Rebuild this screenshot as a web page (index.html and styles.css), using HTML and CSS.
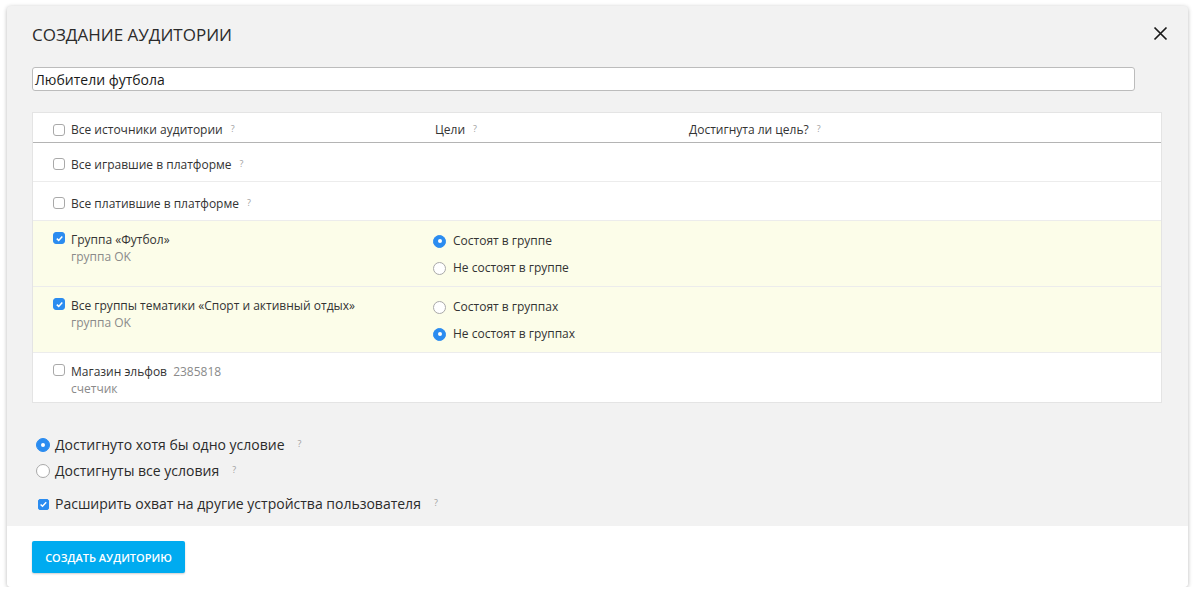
FILE: index.html
```html
<!DOCTYPE html>
<html lang="ru">
<head>
<meta charset="utf-8">
<title>Создание аудитории</title>
<link rel="stylesheet" href="styles.css">
</head>
<body>
<div class="modal">
  <div class="body">
    <div class="head">
      <h1 class="title">Создание аудитории</h1>
      <span class="close"><svg width="15" height="15" viewBox="0 0 15 15"><path d="M1.5 1.5L13.5 13.5M13.5 1.5L1.5 13.5" stroke="#1a1a1a" stroke-width="1.7" fill="none"/></svg></span>
    </div>
    <div class="name-field">Любители футбола</div>

    <div class="table">
      <div class="row header">
        <div class="cell c1"><span class="cb"></span><span class="lbl">Все источники аудитории</span><span class="q">?</span></div>
        <div class="cell c2"><span class="lbl hdr2">Цели</span><span class="q">?</span></div>
        <div class="cell c3"><span class="lbl">Достигнута ли цель?</span><span class="q">?</span></div>
      </div>
      <div class="row simple">
        <div class="cell c1"><span class="cb"></span><span class="lbl">Все игравшие в платформе</span><span class="q">?</span></div>
      </div>
      <div class="row simple">
        <div class="cell c1"><span class="cb"></span><span class="lbl">Все платившие в платформе</span><span class="q">?</span></div>
      </div>
      <div class="row multi active">
        <div class="cell c1 top">
          <span class="cb on"><svg width="9" height="9" viewBox="0 0 9 9"><path d="M1.8 4.6L3.7 6.4L7.3 2.4" stroke="#fff" stroke-width="1.5" fill="none"/></svg></span>
          <div class="src"><div class="lbl">Группа «Футбол»</div><div class="sub">группа OK</div></div>
        </div>
        <div class="cell c2 radios">
          <div class="ropt"><span class="rb on"></span>Состоят в группе</div>
          <div class="ropt"><span class="rb"></span>Не состоят в группе</div>
        </div>
      </div>
      <div class="row multi active">
        <div class="cell c1 top">
          <span class="cb on"><svg width="9" height="9" viewBox="0 0 9 9"><path d="M1.8 4.6L3.7 6.4L7.3 2.4" stroke="#fff" stroke-width="1.5" fill="none"/></svg></span>
          <div class="src"><div class="lbl">Все группы тематики «Спорт и активный отдых»</div><div class="sub">группа OK</div></div>
        </div>
        <div class="cell c2 radios">
          <div class="ropt"><span class="rb"></span>Состоят в группах</div>
          <div class="ropt"><span class="rb on"></span>Не состоят в группах</div>
        </div>
      </div>
      <div class="row last">
        <div class="cell c1 top">
          <span class="cb"></span>
          <div class="src"><div class="lbl">Магазин эльфов <span class="num">2385818</span></div><div class="sub">счетчик</div></div>
        </div>
      </div>
    </div>

    <div class="options">
      <div class="opt"><span class="rb big on"></span>Достигнуто хотя бы одно условие<span class="q">?</span></div>
      <div class="opt"><span class="rb big"></span>Достигнуты все условия<span class="q">?</span></div>
      <div class="opt ext"><span class="cb on"><svg width="9" height="9" viewBox="0 0 9 9"><path d="M1.6 4.5L3.5 6.3L7.2 2.3" stroke="#fff" stroke-width="1.5" fill="none"/></svg></span>Расширить охват на другие устройства пользователя<span class="q">?</span></div>
    </div>
  </div>
  <div class="footer">
    <button class="btn">Создать аудиторию</button>
  </div>
</div>
</body>
</html>
```

FILE: styles.css
```css
* { box-sizing: border-box; }
html, body { margin: 0; padding: 0; background: #fff; }
body {
  font-family: "Open Sans", "Liberation Sans", sans-serif;
  color: #333;
  padding: 6px 0 0 7px;
}
.modal {
  width: 1181px;
  height: 581px;
  background: #f2f2f2;
  border-radius: 4px;
  box-shadow: 0 1px 4px rgba(0,0,0,0.28);
  display: flex;
  flex-direction: column;
  overflow: hidden;
}
.body {
  padding: 17px 26px 12px 25px;
  flex: 1;
}
.head {
  display: flex;
  justify-content: space-between;
  align-items: center;
  height: 24px;
}
.title {
  margin: 0;
  font-size: 17px;
  font-weight: 400;
  text-transform: uppercase;
  line-height: 24px;
  color: #2b2b2b;
}
.close {
  display: flex;
  margin-right: -6px;
  margin-top: -3px;
}
.name-field {
  margin-top: 20px;
  width: 1103px;
  height: 24px;
  border: 1px solid #bcbcbc;
  border-radius: 3px;
  background: #fff;
  font-size: 14px;
  line-height: 19px;
  padding: 2px 0 0 2px;
  color: #1a1a1a;
}
.table {
  margin-top: 21px;
  background: #fff;
  border: 1px solid #e4e4e4;
}
.row {
  display: grid;
  grid-template-columns: 400px 256px 1fr;
  border-bottom: 1px solid #ececec;
  font-size: 12px;
}
.row.header {
  height: 30px;
  border-bottom: 1px solid #b4b4b4;
  align-items: center;
}
.row.header .cell, .row.simple .cell { padding-top: 4px; }
.row.simple { height: 39px; align-items: center; }
.row.multi { height: 66px; }
.row.active { background: #fcfde9; }
.row.last { height: 49px; border-bottom: none; }
.cell { display: flex; align-items: center; }
.c1 { padding-left: 20px; }
.cell.top { align-items: flex-start; padding-top: 10px; }
.row.last .cell.top { padding-top: 10px; }
.hdr2 { margin-left: 2px; }
.lbl { color: #333; line-height: 17px; }
.sub { color: #8a8a8a; line-height: 17px; }
.num { color: #8a8a8a; margin-left: 3px; }
.src { display: flex; flex-direction: column; }
.q {
  font-size: 9px;
  color: #a0a0a0;
  margin-left: 8px;
  position: relative;
  top: -1px;
}
.cb {
  width: 12px;
  height: 12px;
  border: 1px solid #a9a9a9;
  border-radius: 3px;
  background: #fff;
  margin-right: 6px;
  flex: none;
  display: inline-flex;
  align-items: center;
  justify-content: center;
}
.cell.top .cb { margin-top: 1px; }
.cb.on { background: #2b8cf0; border-color: #2b8cf0; }
.radios {
  flex-direction: column;
  align-items: flex-start;
  justify-content: flex-start;
  padding-top: 11px;
  gap: 9px;
}
.ropt {
  display: flex;
  align-items: center;
  line-height: 18px;
  color: #333;
}
.rb {
  width: 13px;
  height: 13px;
  border-radius: 50%;
  border: 1px solid #a9a9a9;
  background: #fff;
  margin-right: 7px;
  flex: none;
  position: relative;
}
.rb.on { background: #2b8cf0; border-color: #2b8cf0; }
.rb.on::after {
  content: "";
  position: absolute;
  left: 50%;
  top: 50%;
  width: 4px;
  height: 4px;
  margin: -2px 0 0 -2px;
  border-radius: 50%;
  background: #fff;
}
.options {
  margin-top: 32px;
  padding-left: 4px;
  font-size: 14px;
}
.opt {
  display: flex;
  align-items: center;
  line-height: 20px;
  color: #2b2b2b;
}
.opt + .opt { margin-top: 6px; }
.opt.ext { margin-top: 13px; padding-left: 2px; }
.opt .rb { width: 14px; height: 14px; margin-right: 5px; }
.opt .cb { width: 11px; height: 11px; margin-right: 6px; border-radius: 2px; }
.opt .q { margin-left: 13px; }
.footer {
  background: #fff;
  height: 61px;
  padding: 15px 0 0 25px;
}
.btn {
  width: 153px;
  height: 32px;
  background: #00abf0;
  color: #fff;
  border: none;
  border-radius: 2px;
  font-family: "Open Sans", "Liberation Sans", sans-serif;
  font-size: 11px;
  font-weight: 600;
  text-transform: uppercase;
  box-shadow: 0 1px 2px rgba(0,0,0,0.2);
  padding: 0;
}
```
